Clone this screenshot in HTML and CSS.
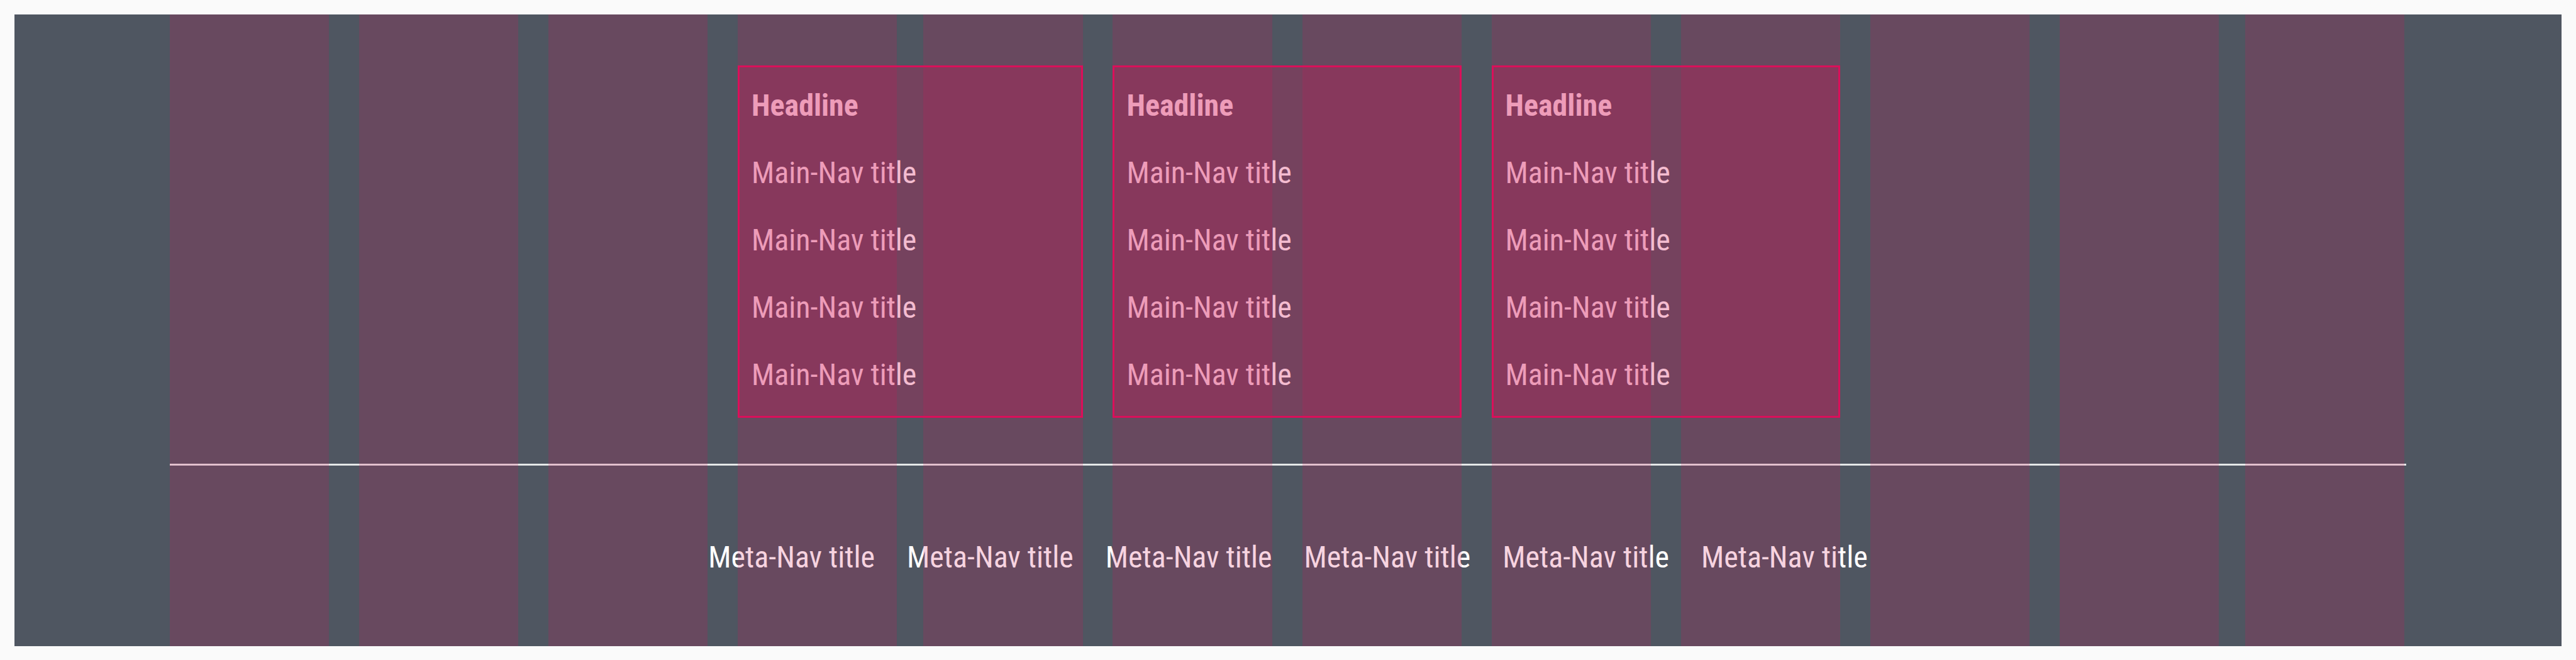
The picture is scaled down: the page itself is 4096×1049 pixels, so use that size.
FILE: index.html
```html
<!DOCTYPE html>
<html lang="en">
<head>
  <meta charset="utf-8">
  <meta name="viewport" content="width=device-width, initial-scale=1">
  <title>Footer navigation</title>
  <link rel="stylesheet" href="styles.css">
</head>
<body>
  <footer class="footer">
    <div class="main-nav columns">
      <nav class="nav-box" aria-labelledby="nav-1">
        <h2 class="nav-headline" id="nav-1">Headline</h2>
        <ul class="nav-list">
          <li><a href="#">Main-Nav title</a></li>
          <li><a href="#">Main-Nav title</a></li>
          <li><a href="#">Main-Nav title</a></li>
          <li><a href="#">Main-Nav title</a></li>
        </ul>
      </nav>
      <nav class="nav-box" aria-labelledby="nav-2">
        <h2 class="nav-headline" id="nav-2">Headline</h2>
        <ul class="nav-list">
          <li><a href="#">Main-Nav title</a></li>
          <li><a href="#">Main-Nav title</a></li>
          <li><a href="#">Main-Nav title</a></li>
          <li><a href="#">Main-Nav title</a></li>
        </ul>
      </nav>
      <nav class="nav-box" aria-labelledby="nav-3">
        <h2 class="nav-headline" id="nav-3">Headline</h2>
        <ul class="nav-list">
          <li><a href="#">Main-Nav title</a></li>
          <li><a href="#">Main-Nav title</a></li>
          <li><a href="#">Main-Nav title</a></li>
          <li><a href="#">Main-Nav title</a></li>
        </ul>
      </nav>
    </div>
    <hr class="divider">
    <nav aria-label="Meta">
      <ul class="meta-nav">
        <li><a href="#">Meta-Nav title</a></li>
        <li><a href="#">Meta-Nav title</a></li>
        <li><a href="#">Meta-Nav title</a></li>
        <li><a href="#">Meta-Nav title</a></li>
        <li><a href="#">Meta-Nav title</a></li>
        <li><a href="#">Meta-Nav title</a></li>
      </ul>
    </nav>
    <div class="grid-overlay columns" aria-hidden="true">
      <i></i><i></i><i></i><i></i><i></i><i></i><i></i><i></i>
      <i></i><i></i><i></i><i></i><i></i><i></i><i></i><i></i>
      <i></i><i></i><i></i><i></i><i></i><i></i><i></i>
    </div>
  </footer>
</body>
</html>
```
FILE: styles.css
```css
:root {
  --slate: #4f5661;
  --accent: #db0f5a;
  --column-tint: rgb(214 20 90 / 19%);
  --box-tint: rgb(214 15 86 / 28%);
  --side: 6.1%;
}

* {
  box-sizing: border-box;
}

body {
  margin: 0;
  padding: 23px;
  background: #fafafa;
  font-family: "Roboto Condensed", "Liberation Sans Narrow", sans-serif;
  font-size: 48px;
  line-height: 107px;
}

.footer {
  position: relative;
  padding: 81px var(--side) 88px;
  background: var(--slate);
  color: #fff;
}

a {
  color: inherit;
  text-decoration: none;
}

ul {
  margin: 0;
  padding: 0;
  list-style: none;
}

/* Twelve columns with a gutter track after each one */
.columns {
  display: grid;
  grid-template-columns:
    270fr 51fr 270fr 51fr 270fr 51fr 270fr 45fr
    270fr 51fr 270fr 51fr 270fr 51fr 270fr 51fr
    270fr 51fr 270fr 51fr 270fr 45fr 270fr 3fr;
}

.nav-box {
  position: relative;
  padding: 10px 22px 15px;
}

.nav-box:nth-child(1) {
  grid-column: 7 / span 3;
}

.nav-box:nth-child(2) {
  grid-column: 11 / span 3;
}

.nav-box:nth-child(3) {
  grid-column: 15 / span 3;
}

/* Tinted sheet that lies over the links and the column guides */
.nav-box::after {
  content: "";
  position: absolute;
  z-index: 2;
  inset: 0;
  border: 3px solid var(--accent);
  background: var(--box-tint) padding-box;
  pointer-events: none;
}

.nav-headline {
  margin: 0;
  font-size: inherit;
  font-weight: 700;
}

.divider {
  height: 3px;
  margin: 73px 0 92px;
  border: 0;
  background: #e5e8e8;
}

.meta-nav {
  display: flex;
  flex-wrap: wrap;
  justify-content: center;
  column-gap: 51px;
}

.grid-overlay {
  position: absolute;
  z-index: 1;
  inset: 0;
  padding: 0 var(--side);
  pointer-events: none;
}

.grid-overlay i:nth-child(odd) {
  background: var(--column-tint);
}
```
